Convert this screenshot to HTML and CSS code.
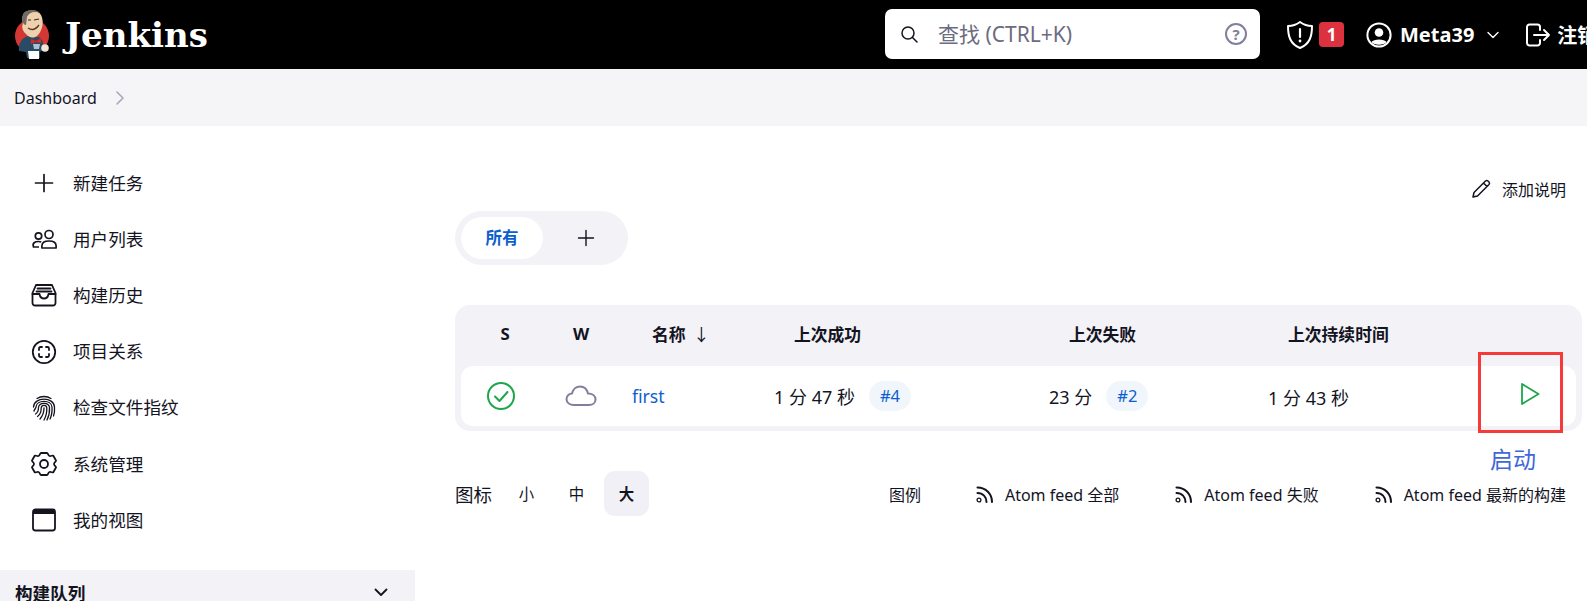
FILE: index.html
```html
<!DOCTYPE html>
<html lang="zh-CN">
<head>
<meta charset="utf-8">
<title>Dashboard [Jenkins]</title>
<link rel="stylesheet" href="styles.css">
</head>
<body>
<header class="top">
  <a class="brand">
    <svg class="logo" viewBox="0 0 36 50" width="36" height="50">
      <circle cx="18" cy="26" r="17" fill="#d33833"/>
      <path d="M5 41 C4 33 8 28 14 26 L25 27 C29 29 30 34 29 40 L26 42 L26 48 L13 48 L12 42Z" fill="#2a4b66"/>
      <path d="M10 3 C14 -1 24 -1 27 5 C30 11 29 19 24 25 C20 29 15 28 12 24 C9 22 7 17 9 14 C8 9 8 6 10 3Z" fill="#eed2ae"/>
      <path d="M10 3 C14 -1 22 -1 26 3 C21 1 15 2 13 7 L12 15 C8 15 7 7 10 3Z" fill="#6f6b66"/>
      <path d="M14 18 Q20 22 25 15" stroke="#5d3526" stroke-width="1.300" fill="none"/>
      <path d="M20 10 L25 9 M14 10 L17 10" stroke="#3a2a22" stroke-width="1.200"/>
      <path d="M17 29 L22 31 L27 28 L27 33 L22 32 L17 34Z" fill="#e3231f"/>
      <path d="M19 34 L26 34 L25 39 L20 39Z" fill="#a9c3d1"/>
      <path d="M14 41 L25 41 L25 49 L15 49Z" fill="#fff"/>
      <circle cx="31" cy="38" r="3.800" fill="#efe6d6"/>
    </svg>
    <span class="brand-name">Jenkins</span>
  </a>
  <div class="search">
    <svg class="search-icon" viewBox="0 0 20 20" width="20" height="20"><circle cx="9" cy="9" r="6" fill="none" stroke="#14141f" stroke-width="1.500"/><path d="M13.500 13.500 L18 18" stroke="#14141f" stroke-width="1.500" stroke-linecap="round"/></svg>
    <span class="search-text">查找 (CTRL+K)</span>
    <span class="help">?</span>
  </div>
  <svg class="shield" viewBox="0 0 28 30" width="28" height="30"><path d="M14 2 C18 5 22 6 26 6 C26 16 24 24 14 28 C4 24 2 16 2 6 C6 6 10 5 14 2Z" fill="none" stroke="#fff" stroke-width="2" stroke-linejoin="round"/><path d="M14 9 V17" stroke="#fff" stroke-width="2.200" stroke-linecap="round"/><circle cx="14" cy="21" r="1.400" fill="#fff"/></svg>
  <span class="badge">1</span>
  <svg class="user-icon" viewBox="0 0 26 26" width="26" height="26"><circle cx="13" cy="13" r="11.600" fill="none" stroke="#fff" stroke-width="2"/><circle cx="13" cy="10.500" r="4.300" fill="#fff"/><path d="M5.500 20 C7.500 16.500 18.500 16.500 20.500 20 C18 23.500 8 23.500 5.500 20Z" fill="#fff"/></svg>
  <span class="user-name">Meta39</span>
  <svg class="caret" viewBox="0 0 12 8" width="12" height="8"><path d="M1 1.500 L6 6.500 L11 1.500" fill="none" stroke="#fff" stroke-width="1.400" stroke-linecap="round" stroke-linejoin="round"/></svg>
  <svg class="logout" viewBox="0 0 26 26" width="26" height="26"><path d="M15 8 V5 a2.500 2.500 0 0 0 -2.500 -2.500 H4.500 A2.500 2.500 0 0 0 2 5 V21 a2.500 2.500 0 0 0 2.500 2.500 H12.500 A2.500 2.500 0 0 0 15 21 V18" fill="none" stroke="#fff" stroke-width="2" stroke-linecap="round"/><path d="M9 13 H24 M19 8 L24 13 L19 18" fill="none" stroke="#fff" stroke-width="2" stroke-linecap="round" stroke-linejoin="round"/></svg>
  <span class="logout-text">注销</span>
</header>

<nav class="crumbs">
  <span>Dashboard</span>
  <svg viewBox="0 0 10 16" width="10" height="16"><path d="M2 2 L8 8 L2 14" fill="none" stroke="#a8a8b8" stroke-width="1.600" stroke-linecap="round" stroke-linejoin="round"/></svg>
</nav>

<div class="page">
  <aside class="side">
    <ul class="tasks">
      <li class="task">
        <svg class="task-icon" viewBox="0 0 26 26"><path d="M13 4.500 V21.500 M4.500 13 H21.500" fill="none" stroke="#14141f" stroke-width="1.700" stroke-linecap="round"/></svg>
        <span>新建任务</span>
      </li>
      <li class="task">
        <svg class="task-icon" viewBox="0 0 26 26"><g fill="none" stroke="#14141f" stroke-width="1.700"><circle cx="18" cy="8.500" r="4"/><circle cx="7.500" cy="10" r="3.200"/><path d="M11 22 C10 16 14 15 18 15 C22 15 26 16 25 22 Z" stroke-linejoin="round"/><path d="M8 21 H2.500 C1 17 4 15.500 7.500 15.500 C8.500 15.500 9.500 15.700 10.300 16"/></g></svg>
        <span>用户列表</span>
      </li>
      <li class="task">
        <svg class="task-icon" viewBox="0 0 26 26"><g fill="none" stroke="#14141f" stroke-width="1.800" stroke-linejoin="round" stroke-linecap="round"><path d="M5 3 H21 L24.500 11 V21 a2.500 2.500 0 0 1 -2.500 2.500 H4 A2.500 2.500 0 0 1 1.500 21 V11Z"/><path d="M1.500 12 H8.500 C9 15 10.500 16.500 13 16.500 C15.500 16.500 17 15 17.500 12 H24.500"/><path d="M6.500 6.500 H19.500 M5.500 9.500 H20.500"/></g></svg>
        <span>构建历史</span>
      </li>
      <li class="task">
        <svg class="task-icon" viewBox="0 0 26 26"><g fill="none" stroke="#14141f" stroke-width="1.800" stroke-linecap="round" stroke-linejoin="round"><circle cx="13" cy="13" r="11.200"/><path d="M8 11 V9.500 A1.500 1.500 0 0 1 9.500 8 H11 M15 8 H16.500 A1.500 1.500 0 0 1 18 9.500 V11 M18 15 V16.500 A1.500 1.500 0 0 1 16.500 18 H15 M11 18 H9.500 A1.500 1.500 0 0 1 8 16.500 V15"/></g></svg>
        <span>项目关系</span>
      </li>
      <li class="task">
        <svg class="task-icon" viewBox="0 0 26 26"><g fill="none" stroke="#14141f" stroke-width="1.300" stroke-linecap="round"><path d="M6 3.500 C10 0.800 16 0.800 20 3.500"/><path d="M2.500 12 C3 1.500 23 1.500 23.500 12 C23.800 16 23.300 19 22.500 21"/><path d="M3 16 C3.500 14 4.500 14 5 12 C5.500 4.500 20.500 4.500 21 12 C21.300 17 20.500 21 19 24"/><path d="M4.500 19 C7 17.500 7.500 15 7.500 12.500 C8 7 18 7 18.500 12.500 C18.800 17 18 21 16 25"/><path d="M6.500 21.500 C9.500 19.500 10.200 16 10.200 13 C10.500 9.500 15.500 9.500 15.800 13 C16 17.500 15 21.500 13 25"/><path d="M9 24 C11.500 21 13 17 13 13"/></g></svg>
        <span>检查文件指纹</span>
      </li>
      <li class="task">
        <svg class="task-icon" viewBox="0 0 26 26"><g fill="none" stroke="#14141f" stroke-width="1.800" stroke-linejoin="round"><path d="M10 2 H16 C17 2 17 4.500 18.500 5 C20 5.500 21.500 4 22.300 4.700 L25 9.500 C25.300 10.500 23 11.300 23 13 C23 14.700 25.300 15.500 25 16.500 L22.300 21.300 C21.500 22 20 20.500 18.500 21 C17 21.500 17 24 16 24 H10 C9 24 9 21.500 7.500 21 C6 20.500 4.500 22 3.700 21.300 L1 16.500 C0.700 15.500 3 14.700 3 13 C3 11.300 0.700 10.500 1 9.500 L3.700 4.700 C4.500 4 6 5.500 7.500 5 C9 4.500 9 2 10 2Z"/><circle cx="13" cy="13" r="4"/></g></svg>
        <span>系统管理</span>
      </li>
      <li class="task">
        <svg class="task-icon" viewBox="0 0 26 26"><rect x="2" y="2.500" width="22" height="21" rx="2.500" fill="none" stroke="#14141f" stroke-width="1.800"/><path d="M2 4.500 A2.500 2.500 0 0 1 4.500 2 H21.500 A2.500 2.500 0 0 1 24 4.500 V7 H2Z" fill="#14141f"/></svg>
        <span>我的视图</span>
      </li>
    </ul>
    <section class="queue">
      <h2 class="queue-title">构建队列</h2>
      <svg viewBox="0 0 14 9" width="14" height="9"><path d="M1.500 1.500 L7 7 L12.500 1.500" fill="none" stroke="#14141f" stroke-width="1.800" stroke-linecap="round" stroke-linejoin="round"/></svg>
    </section>
  </aside>

  <main class="main">
    <div class="actions">
      <svg viewBox="0 0 22 22" width="22" height="22"><path d="M3 19 L4 14.500 L15.500 3 C16.300 2.300 17.300 2.300 18 3 L19 4 C19.700 4.800 19.700 5.700 19 6.500 L7.500 18Z M13.500 5 L17 8.500" fill="none" stroke="#14141f" stroke-width="1.500" stroke-linejoin="round" stroke-linecap="round"/></svg>
      <span>添加说明</span>
    </div>

    <div class="tabs">
      <span class="tab-active"><span class="tab-label">所有</span></span>
      <span class="tab-add"><svg viewBox="0 0 18 18" width="18" height="18"><path d="M9 1.500 V16.500 M1.500 9 H16.500" stroke="#14141f" stroke-width="1.400" stroke-linecap="round"/></svg></span>
    </div>

    <div class="table-wrap">
      <table class="jobs">
        <thead>
          <tr>
            <th class="col-s">S</th>
            <th class="col-w">W</th>
            <th class="col-name">名称 <span class="arrow">↓</span></th>
            <th class="col-ok">上次成功</th>
            <th class="col-fail">上次失败</th>
            <th class="col-dur">上次持续时间</th>
            <th class="col-run"></th>
          </tr>
        </thead>
        <tbody>
          <tr>
            <td class="center status-cell"><svg viewBox="0 0 30 30" width="30" height="30" class="icon-block"><circle cx="15" cy="15" r="13" fill="none" stroke="#1ea64b" stroke-width="2"/><path d="M9 15.500 L13.500 20 L21.500 11" fill="none" stroke="#1ea64b" stroke-width="2" stroke-linecap="round" stroke-linejoin="round"/></svg></td>
            <td class="center"><svg viewBox="0 0 32 24" width="32" height="24" class="icon-block"><path d="M9 21 C4.500 21 1.500 18.500 1.500 15 C1.500 11.500 4.500 9.500 7 9.500 C8 5 11.500 2.500 15 2.500 C19 2.500 22 5 23 9.500 C27 9.500 30.500 11.500 30.500 15.500 C30.500 19 27.500 21 24 21Z" fill="none" stroke="#807f9c" stroke-width="2" stroke-linejoin="round"/></svg></td>
            <td><a class="job-link">first</a></td>
            <td><span class="time">1 分 47 秒</span><a class="build">#4</a></td>
            <td><span class="time">23 分</span><a class="build">#2</a></td>
            <td><span class="time">1 分 43 秒</span></td>
            <td class="run-cell"><svg viewBox="0 0 20 24" width="20" height="24" class="icon-block"><path d="M2 2 L18.500 12 L2 22Z" fill="none" stroke="#1ea64b" stroke-width="1.800" stroke-linejoin="round"/></svg></td>
          </tr>
        </tbody>
      </table>
    </div>

    <div class="foot">
      <div class="sizes">
        <span class="sizes-label">图标</span>
        <span class="size">小</span>
        <span class="size">中</span>
        <span class="size size-on">大</span>
      </div>
      <div class="feeds">
        <span class="legend">图例</span>
        <span class="feed"><svg viewBox="0 0 18 18" width="18" height="18"><circle cx="3" cy="15" r="1.900" fill="none" stroke="#14141f" stroke-width="1.300"/><path d="M1.500 8 C7 8 10.500 12 10.500 17 M1.500 2.500 C10 2.500 16 9 16 17" fill="none" stroke="#14141f" stroke-width="2" stroke-linecap="round"/></svg>Atom feed 全部</span>
        <span class="feed"><svg viewBox="0 0 18 18" width="18" height="18"><circle cx="3" cy="15" r="1.900" fill="none" stroke="#14141f" stroke-width="1.300"/><path d="M1.500 8 C7 8 10.500 12 10.500 17 M1.500 2.500 C10 2.500 16 9 16 17" fill="none" stroke="#14141f" stroke-width="2" stroke-linecap="round"/></svg>Atom feed 失败</span>
        <span class="feed"><svg viewBox="0 0 18 18" width="18" height="18"><circle cx="3" cy="15" r="1.900" fill="none" stroke="#14141f" stroke-width="1.300"/><path d="M1.500 8 C7 8 10.500 12 10.500 17 M1.500 2.500 C10 2.500 16 9 16 17" fill="none" stroke="#14141f" stroke-width="2" stroke-linecap="round"/></svg>Atom feed 最新的构建</span>
      </div>
    </div>

    <div class="callout"></div>
    <div class="callout-label">启动</div>
  </main>
</div>
</body>
</html>
```

FILE: styles.css
```css
* { box-sizing: border-box; }
html, body { height: 100%; overflow: hidden; }
body {
  margin: 0;
  background: #fff;
  color: #14141f;
  font-family: "Noto Sans", "Noto Sans CJK SC", sans-serif;
  font-size: 16px;
}
ul { list-style: none; margin: 0; padding: 0; }
svg { flex: none; }

.top {
  height: 69px;
  background: #000;
  color: #fff;
  display: flex;
  align-items: center;
  padding-left: 14px;
  white-space: nowrap;
  width: 1587px;
  overflow: hidden;
}
.brand { display: flex; align-items: center; width: 871px; flex: none; }
.logo { display: block; }
.brand-name {
  margin-left: 15px;
  font-family: "DejaVu Serif", serif;
  font-weight: 700;
  font-size: 34px;
  line-height: 44px;
  color: #fff;
}
.search {
  width: 375px;
  height: 50px;
  margin-bottom: 1px;
  background: #fff;
  border-radius: 7px;
  display: flex;
  align-items: center;
  padding: 0 13px 0 14px;
  flex: none;
}
.search-icon { margin-bottom: 1px; }
.search-text { margin: 0 0 2px 19px; color: #6d6b80; font-size: 21px; flex: 1; }
.help {
  width: 22px;
  height: 22px;
  border: 2px solid #807f9c;
  border-radius: 50%;
  color: #807f9c;
  font-size: 15px;
  font-weight: 700;
  display: flex;
  align-items: center;
  justify-content: center;
}
.shield { margin-left: 26px; flex: none; }
.badge {
  margin-left: 5px;
  width: 25px;
  height: 25px;
  flex: none;
  background: #dc3240;
  border-radius: 4px;
  color: #fff;
  font-size: 17px;
  font-weight: 700;
  display: flex;
  align-items: center;
  justify-content: center;
}
.user-icon { margin-left: 22px; }
.user-name { margin-left: 8px; font-size: 20px; font-weight: 700; }
.caret { margin-left: 13px; }
.logout { margin-left: 26px; }
.logout-text { margin-left: 6px; font-size: 20px; font-weight: 700; flex: none; }

.crumbs {
  height: 57px;
  background: #f5f5f8;
  display: flex;
  align-items: center;
  gap: 18px;
  padding-left: 14px;
  font-size: 16px;
}

.page { display: flex; }
.side { width: 415px; flex: none; padding-top: 29px; }
.task { height: 56.200px; display: flex; align-items: center; padding-left: 31px; font-size: 17.600px; }
.task span { margin-bottom: 2px; }
.task-icon { width: 26px; height: 26px; margin-right: 16px; }
.queue {
  margin-top: 21.600px;
  height: 46px;
  background: #f2f2f7;
  display: flex;
  align-items: center;
  justify-content: space-between;
  padding: 0 27px 0 15px;
}
.queue-title { margin: 0; font-size: 17.600px; font-weight: 700; }

.main { position: relative; flex: none; width: 1172px; padding-left: 40px; padding-right: 5px; }
.actions {
  height: 24px;
  margin-top: 51px;
  display: flex;
  justify-content: flex-end;
  align-items: center;
  gap: 10px;
  padding-right: 16px;
  font-size: 16px;
}
.tabs {
  margin-top: 10px;
  width: 173px;
  height: 54px;
  background: #f2f2f7;
  border-radius: 27px;
  padding: 6px;
  display: flex;
  align-items: center;
}
.tab-active {
  flex: none;
  width: 82px;
  height: 42px;
  background: #fff;
  border-radius: 21px;
  color: #0b5fd0;
  font-weight: 700;
  font-size: 16.500px;
  display: flex;
  align-items: center;
  justify-content: center;
}
.tab-label { margin-bottom: 2px; }
.tab-add { flex: 1; padding-left: 6px; display: flex; justify-content: center; }

.table-wrap {
  margin-top: 40px;
  background: #f2f2f7;
  border-radius: 15px;
  padding: 0 6px 5px;
}
.jobs { width: 1115px; table-layout: fixed; border-collapse: separate; border-spacing: 0; }
.jobs th {
  height: 61px;
  font-size: 16.800px;
  font-weight: 700;
  text-align: left;
  padding: 0 0 4px 39px;
  white-space: nowrap;
}
.jobs td {
  height: 60px;
  background: #fff;
  padding: 0 0 0 19px;
  font-size: 18px;
  white-space: nowrap;
}
.jobs td:first-child { border-radius: 12px 0 0 12px; }
.jobs td:last-child { border-radius: 0 12px 12px 0; }
.jobs .col-s, .jobs .col-w, .jobs .center { text-align: center; padding: 0 0 4px; }
.jobs .center { padding: 0; }
.jobs .status-cell { padding-right: 8px; }
.col-s { width: 88px; }
.col-w { width: 64px; }
.col-name { width: 142px; }
.col-ok { width: 275px; }
.col-fail { width: 219px; }
.col-dur { width: 221px; }
.col-run { width: 106px; }
.icon-block { display: block; margin: 0 auto; }
.arrow { font-weight: 400; margin-left: 3px; }
.job-link { color: #0b5fd0; font-size: 17.600px; }
.time { display: inline-block; vertical-align: middle; margin-right: 14px; }
.build {
  display: inline-block;
  padding: 0 11px;
  height: 30px;
  line-height: 30px;
  border-radius: 15px;
  background: #f1f5fc;
  color: #0b5fd0;
  font-size: 16.500px;
  vertical-align: middle;
}
.jobs .run-cell { padding: 0 36px 4px 0; }
.run-cell .icon-block { margin: 0 0 0 auto; }

.foot {
  margin-top: 40px;
  display: flex;
  align-items: center;
  justify-content: space-between;
  font-size: 16px;
  padding-right: 16px;
}
.sizes { display: flex; align-items: center; }
.sizes-label { font-size: 18.500px; margin-right: 7px; }
.size { width: 45px; height: 45px; margin-left: 5px; border-radius: 11px; display: flex; align-items: center; justify-content: center; font-size: 15.400px; }
.size-on { background: #f0f0f6; font-weight: 700; }
.feeds { display: flex; align-items: center; }
.legend { margin-right: 55px; }
.feed { display: flex; align-items: center; gap: 11px; margin-right: 56px; }
.feed:last-child { margin-right: 0; }

.callout {
  position: absolute;
  left: 1063px;
  top: 226px;
  width: 85px;
  height: 81px;
  border: 3px solid #f63a3a;
}
.callout-label {
  position: absolute;
  left: 1075px;
  top: 317px;
  font-size: 23px;
  line-height: 32px;
  color: #3f67d8;
}
```
